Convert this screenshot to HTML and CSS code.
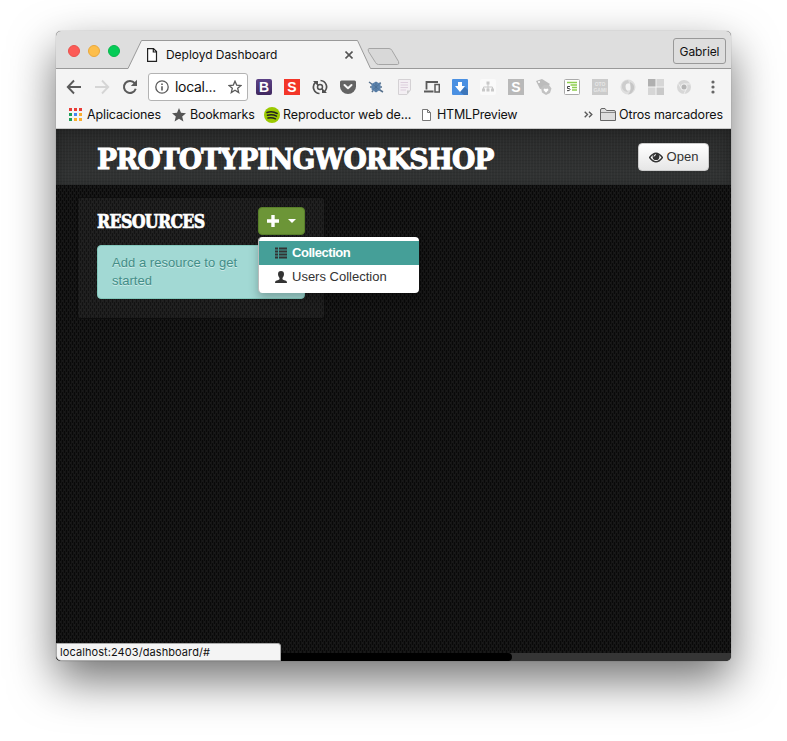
FILE: index.html
```
<!DOCTYPE html>
<html lang="es">
<head>
<meta charset="utf-8">
<title>Deployd Dashboard</title>
<link rel="stylesheet" href="styles.css">
</head>
<body>
<div class="window">
  <div class="tabstrip">
    <svg class="tabshape" width="675" height="38"><path d="M0 37.5H72L85.500 9H301.500L314.500 37.500H675V38H0Z" fill="#f4f4f4"/><path d="M0 37.500H72L85.500 9.500H301.500L314.500 37.500H675" fill="none" stroke="#999"/><path d="M313 17.500h20q2 0 3 2l6.500 11q1 3-1 3h-19q-2 0-3-2l-7-11q-1-3 .5-3z" fill="#d8d8d8" stroke="#a5a5a5"/></svg>
    <div class="lights"><i class="red"></i><i class="yellow"></i><i class="green"></i></div>
    <div class="tab">
      <svg width="12" height="16" viewBox="0 0 12 16"><path d="M.6 1.600H6.500L9.500 4.600V14.400H.6ZM6.300 1.600V5H9.500" fill="#fff" stroke="#222" stroke-width="1.200"/></svg>
      <span class="tab-title">Deployd Dashboard</span>
      <svg class="close" width="8" height="8"><path d="M.5 .5l7 7M7.500 .5l-7 7" stroke="#555" stroke-width="1.600"/></svg>
    </div>
    <div class="profile">Gabriel</div>
  </div>
  <div class="toolbar">
    <svg width="16" height="16" class="back"><path d="M8 1.500L1.800 8 8 14.500M2 8H15" fill="none" stroke="#5a5a5a" stroke-width="1.900"/></svg>
    <svg width="16" height="16" class="fwd"><path d="M8 1.500L14.200 8 8 14.500M14 8H1" fill="none" stroke="#d5d5d5" stroke-width="1.900"/></svg>
    <svg width="16" height="16" class="reload"><path d="M13.700 9.700A6 6 0 1 1 12.700 4.200" fill="none" stroke="#5a5a5a" stroke-width="2"/><path d="M15 .8V7H8.800Z" fill="#5a5a5a"/></svg>
    <div class="omnibox">
      <svg width="14" height="14"><circle cx="7" cy="7" r="6.200" fill="none" stroke="#5a5a5a" stroke-width="1.300"/><path d="M7 6.200V10.500M7 3.500V5" stroke="#5a5a5a" stroke-width="1.600"/></svg>
      <span class="url">local...</span>
      <svg width="14" height="14" viewBox="0 0 14 14"><path d="M7 1.200L8.700 5.100 13 5.500 9.700 8.300 10.700 12.600 7 10.300 3.300 12.600 4.300 8.300 1 5.500 5.300 5.100Z" fill="none" stroke="#5a5a5a" stroke-width="1.300"/></svg>
    </div>
    <div class="extensions">
      <div class="ext bootstrap">B</div>
      <div class="ext scribe">S</div>
      <svg class="ico" viewBox="0 0 16 16"><path d="M8.500 1.500A6.400 6.400 0 0 1 12.800 12.300M7.500 14.500A6.400 6.400 0 0 1 3.200 3.700" fill="none" stroke="#505050" stroke-width="1.700"/><path d="M1 2H6V7ZM15 14H10V9Z" fill="#505050"/><circle cx="8" cy="8" r="2.500" fill="none" stroke="#505050" stroke-width="1.500"/></svg>
      <svg class="ico" viewBox="0 0 16 16"><path d="M1.500 1.500H14.500Q16 1.500 16 3V7.500A8 7.500 0 0 1 0 7.500V3Q0 1.500 1.500 1.500Z" fill="#636363"/><path d="M4.500 6L8 9.300 11.500 6" fill="none" stroke="#f4f4f4" stroke-width="2" stroke-linecap="round" stroke-linejoin="round"/></svg>
      <svg class="ico" viewBox="0 0 16 16"><path d="M1 3L4.500 5.500M11 10.500L15 13M2 8H14M11 4.500L13 4M5 11.500L4 13" stroke="#57718d" stroke-width="1.500"/><path d="M8 2.500L12.500 5V10.500L8 13.500 3.500 10.500V5Z" fill="#5c83ad"/><path d="M5 5.500L11 10.500M11 5.500L5 10.500M8 3V13" stroke="#476b91" stroke-width=".7"/></svg>
      <svg class="ico" viewBox="0 0 16 16"><path d="M2.500 .5H14.500V11L11 15.500H2.500Z" fill="#f3eff3" stroke="#d4d1d4"/><path d="M4.500 3.500H12M4.500 6H12M4.500 8.500H12M4.500 11H10" stroke="#ddcfdd"/><path d="M11 15V11.500H14" fill="#ccc"/></svg>
      <svg class="ico" viewBox="0 0 16 16"><path d="M2.500 10.500V3H14M0 12.500H9.500" fill="none" stroke="#5a5a5a" stroke-width="1.800"/><rect x="11" y="5.500" width="4.300" height="7.500" fill="#f4f4f4" stroke="#5a5a5a" stroke-width="1.500"/></svg>
      <svg class="ico" viewBox="0 0 16 16"><rect width="16" height="16" rx="1" fill="#4a90e2"/><path d="M13 8L16 11V16H12L8 13Z" fill="#3c76ba"/><path d="M6 3H10V7H13L8 13 3 7H6Z" fill="#fff"/></svg>
      <svg class="ico" viewBox="0 0 16 16"><rect width="16" height="16" rx="2" fill="#fafafa"/><path d="M8 5V11M3.500 10V8H12.500V10" fill="none" stroke="#c8c8c8"/><path d="M6.500 2.500h3v3h-3zM2 9.500h3v3H2zM6.500 9.500h3v3h-3zM11 9.500h3v3h-3z" fill="#c8c8c8"/></svg>
      <div class="ext stylish">S</div>
      <svg class="ico" viewBox="0 0 16 16"><path d="M0 2L6 0 14 5 10 9 4 10Z" fill="#bcbcbc"/><circle cx="3" cy="3" r="1" fill="#fff"/><path d="M5 9L8 6 13 6 15.500 9.500 14 14 10 16 6 13.500Z" fill="#c2c2c2"/><path d="M10 13.700L7.500 11Q8 8.500 10 10 12 8.500 12.500 11Z" fill="#fff"/></svg>
      <svg class="ico" viewBox="0 0 16 16"><rect x=".5" y=".5" width="15" height="15" rx="1" fill="#fff" stroke="#aaa"/><path d="M3 3.500H13M6.500 6H13M8 8.500H13M8 11H13" stroke="#8fce50" stroke-width="1.300"/><path d="M6 7.500H3.500V9.500Q6 9 6 10.500 6 12 3 11.700" fill="none" stroke="#444"/></svg>
      <div class="ext oto"><span>OTO</span><span>GAMI</span></div>
      <svg class="ico" viewBox="0 0 16 16"><circle cx="8" cy="8" r="5.500" fill="none" stroke="#dedede" stroke-width="4"/><path d="M8 1Q1 2 2 9 4 13 8 13 5 10 5.500 7 6 4 9 4Z" fill="#cdcdcd"/><path d="M10 3Q15 5 14 10 12 15 8 15.500 11 12 10.500 8 Z" fill="#c6c6c6"/></svg>
      <svg class="ico" viewBox="0 0 16 16"><path d="M0 0h7.500v7.500H0z" fill="#b0b0b0"/><path d="M8.500 0H16v7.500H8.500zM0 8.500h7.500V16H0z" fill="#d6d6d6"/><path d="M8.500 8.500H16V16H8.500z" fill="#c9c9c9"/></svg>
      <svg class="ico" viewBox="0 0 16 16"><circle cx="8" cy="8" r="7" fill="#d7d7d7"/><path d="M8 5H14M8 15L10.500 9.500M5.300 9.500L2.500 4.500" stroke="#eee"/><circle cx="8" cy="8" r="3.500" fill="#eee"/><circle cx="8" cy="8" r="2.500" fill="#b5b5b5"/></svg>
    </div>
    <svg class="menu" width="4" height="14"><circle cx="2" cy="2" r="1.600" fill="#666"/><circle cx="2" cy="7" r="1.600" fill="#666"/><circle cx="2" cy="12" r="1.600" fill="#666"/></svg>
  </div>
  <div class="bookmarks">
    <svg width="14" height="14" class="apps"><path d="M0 0h3v3H0zM5 0h3v3H5zM10 0h3v3h-3z" fill="#e83c36"/><path d="M0 5h3v3H0zM0 10h3v3H0z" fill="#1d9d58"/><path d="M5 5h3v3H5z" fill="#4285f4"/><path d="M10 5h3v3h-3zM5 10h3v3H5zM10 10h3v3h-3z" fill="#f9ae2d"/></svg>
    <span class="b1">Aplicaciones</span>
    <svg width="14" height="14" class="star"><path d="M7 0L9 4.800 14 5.200 10.200 8.500 11.400 13.600 7 10.800 2.600 13.600 3.800 8.500 0 5.200 5 4.800Z" fill="#555"/></svg>
    <span class="b2">Bookmarks</span>
    <svg width="16" height="16" class="spot"><circle cx="8" cy="8" r="8" fill="#9bc900"/><path d="M3 5.500Q8.500 3.800 13.200 6.500M3.500 8.300Q8.500 7 12.500 9.200M4 11Q8 10 11.500 11.800" fill="none" stroke="#222" stroke-width="1.500" stroke-linecap="round"/></svg>
    <span class="b3">Reproductor web de...</span>
    <svg width="9" height="12" class="doc"><path d="M.5 .5H5.500L8.500 3.500V11.500H.5ZM5.500 .5V3.500H8.500" fill="#fff" stroke="#777"/></svg>
    <span class="b4">HTMLPreview</span>
    <svg width="9" height="7" class="chev"><path d="M.7 .7L3.500 3.500 .7 6.300M5 .7L7.800 3.500 5 6.300" fill="none" stroke="#5a5a5a" stroke-width="1.400"/></svg>
    <svg width="16" height="13" class="folder"><path d="M.5 12.500V2Q.5 .5 2 .5H5L6.500 2.500H14Q15.500 2.500 15.500 4V12.500Z" fill="#ddd" stroke="#666"/><path d="M1 4.500H15" stroke="#888"/></svg>
    <span class="b5">Otros marcadores</span>
  </div>
  <header class="header">
    <h1><span>PROTOTYPINGWORKSHOP</span></h1>
    <button class="open"><svg width="14" height="11" viewBox="0 0 14 11"><path d="M.6 5.500Q7-3 13.400 5.500 7 14 .6 5.500Z" fill="#fff" stroke="#333" stroke-width="1.400"/><circle cx="7" cy="4.700" r="3.400" fill="#333"/><path d="M5 4.500Q5 2.700 7 2.700" fill="none" stroke="#fff"/></svg><span>Open</span></button>
  </header>
  <main class="content">
    <section class="panel">
      <div class="panel-head">
        <h2><span>RESOURCES</span></h2>
        <div class="dropdown">
          <button class="add"><svg width="12" height="12"><path d="M4.300 0h3.400v4.300H12v3.400H7.700V12H4.300V7.700H0V4.300h4.300z" fill="#fff"/></svg><svg class="caret" width="8" height="4"><path d="M0 0H8L4 4Z" fill="#fff"/></svg></button>
          <div class="dropdown-menu">
            <div class="item active"><svg width="12" height="12"><path d="M0 .5h3v2H0zM4 .5h8v2H4zM0 3.500h3v2H0zM4 3.500h8v2H4zM0 6.500h3v2H0zM4 6.500h8v2H4zM0 9.500h3v2H0zM4 9.500h8v2H4z" fill="#333"/></svg><span>Collection</span></div>
            <div class="item"><svg width="12" height="12"><path d="M6 0Q9 0 9 3.300 9 5.500 7.500 7V8.200Q8 9 11 9.700 12 10 12 12H0Q0 10 1 9.700 4 9 4.500 8.200V7Q3 5.500 3 3.300 3 0 6 0Z" fill="#333"/></svg><span>Users Collection</span></div>
          </div>
        </div>
      </div>
      <div class="alert">Add a resource to get started</div>
    </section>
  </main>
  <div class="scrollbar"><div class="thumb"></div></div>
  <div class="status">localhost:2403/dashboard/#</div>
</div>
</body>
</html>
```
FILE: styles.css
```
* { box-sizing: border-box; }
body { margin: 0; background: #fff; height: 741px; overflow: hidden; padding: 31px 56px; font-family: Inter, sans-serif; color: #111; }
svg { display: block; flex: none; }
.window { position: relative; display: flex; flex-direction: column; width: 675px; height: 630px; border-radius: 5px; overflow: hidden; background: #111; }
body::before { content: ""; position: absolute; left: 56px; top: 31px; width: 675px; height: 630px; border-radius: 5px; box-shadow: 0 0 1px rgba(0,0,0,.5), 0 19px 46px rgba(0,0,0,.56); }

.tabstrip { position: relative; display: flex; height: 38px; background: #dedede; flex: none; }
.tabshape { position: absolute; left: 0; top: 0; }
.lights { position: relative; display: flex; gap: 8px; padding: 14px 0 0 12px; width: 91px; }
.lights i { width: 12px; height: 12px; border-radius: 50%; }
.red { background: #fc5b57; border: 1px solid #e9514c; }
.yellow { background: #fdbe4b; border: 1px solid #eaa83b; }
.green { background: #05cc57; border: 1px solid #09b64c; }
.tab { position: relative; display: flex; align-items: center; width: 206px; height: 30px; margin-top: 9px; font-size: 12px; }
.tab-title { margin-left: 7px; margin-top: -2px; white-space: nowrap; letter-spacing: -.04px; }
.close { margin-left: auto; }
.profile { position: relative; margin: 7px 5px 0 auto; width: 53px; height: 26px; border: 1px solid #999; border-radius: 3px; font-size: 12px; line-height: 25px; text-align: center; letter-spacing: -.1px; }

.toolbar { display: flex; align-items: center; height: 36px; background: #f4f4f4; flex: none; padding-left: 10px; }
.fwd { margin-left: 12px; }
.reload { margin-left: 12px; }
.omnibox { display: flex; align-items: center; margin-left: 10px; width: 100px; height: 28px; border: 1px solid #b3b3b3; border-radius: 3px; background: #fff; padding: 0 5px 0 6px; }
.url { font-size: 14px; margin: 0 auto 1px 6px; letter-spacing: -.3px; }
.extensions { display: flex; gap: 12px; margin-left: 8px; }
.ico { width: 16px; height: 16px; }
.ext { width: 16px; height: 16px; display: flex; align-items: center; justify-content: center; color: #fff; font: bold 14px/16px "Liberation Sans", sans-serif; }
.bootstrap { background: linear-gradient(#5c4286, #40285f); border-radius: 2px; }
.scribe { background: #f33629; }
.stylish { background: #b9b9b9; }
.oto { background: #cbcbcb; flex-direction: column; font-size: 5px; line-height: 6px; color: #e7e7e7; }
.menu { margin-left: 19px; }

.bookmarks { display: flex; align-items: center; height: 24px; padding: 0 8px 4px 13px; background: #f4f4f4; border-bottom: 1px solid #c8c8c8; flex: none; font-size: 12.500px; letter-spacing: -.13px; white-space: nowrap; }
.b1 { margin-left: 4px; width: 75px; }
.star { margin-left: 10px; }
.b2 { margin-left: 4px; width: 64px; letter-spacing: -.2px; }
.spot { margin-left: 10px; }
.b3 { margin-left: 3px; width: 128px; }
.doc { margin-left: 11px; }
.b4 { margin-left: 6px; letter-spacing: -.2px; }
.chev { margin-left: auto; }
.folder { margin-left: 7px; }
.b5 { margin-left: 3px; width: 104px; }

.header { display: flex; align-items: center; justify-content: space-between; height: 56px; flex: none; padding: 0 22px 0 41px;
  background: repeating-linear-gradient(90deg, rgba(255,255,255,.025) 0 1px, transparent 1px 3px), repeating-linear-gradient(0deg, rgba(0,0,0,.08) 0 1px, transparent 1px 3px), linear-gradient(#292a2a, #333535); box-shadow: inset 0 0 14px rgba(0,0,0,.25); }
h1, h2 { margin: 0; color: #fff; font-family: "DejaVu Serif", serif; font-weight: bold; white-space: nowrap; }
h1 { width: 400px; font-size: 28.500px; line-height: 40px; margin-top: 3px; }
h1 span, h2 span { display: inline-block; transform-origin: 0 50%; }
h1 span { transform: scaleX(.938); letter-spacing: -1px; -webkit-text-stroke: 1.100px #fff; }
button { border: 0; padding: 0; display: flex; align-items: center; justify-content: center; font: 13px "Liberation Sans", sans-serif; color: #333; }
.open { width: 71px; height: 28px; border-radius: 4px; border: 1px solid #ccc; background: linear-gradient(#fff, #e6e6e6); gap: 4px; }
.open span { margin-top: -1px; }

/* woven texture: two offset columns of dark dashes */
.content { flex: 1; padding: 12px 21px; font-family: "Liberation Sans", sans-serif; font-size: 13px;
  background-color: #191919;
  background-image: linear-gradient(#0a0a0a 4px, transparent 4px), linear-gradient(#0a0a0a 4px, transparent 4px), linear-gradient(90deg, #141414 1px, transparent 1px);
  background-size: 4px 6px, 4px 6px, 2px 6px;
  background-position: 0 0, 2px 3px, 1px 0;
  background-image: conic-gradient(from 0deg at 1px 4px, transparent 270deg, #090909 0), conic-gradient(from 0deg at 1px 4px, transparent 270deg, #090909 0), linear-gradient(90deg, #151515 1px, transparent 1px); }
.panel { width: 248px; height: 122px; border: 1px solid #0d0d0d; border-radius: 3px; padding: 9px 19px; background: rgba(255,255,255,.045); }
.panel-head { display: flex; justify-content: space-between; }
h2 { font-size: 18px; line-height: 30px; width: 110px; }
h2 span { transform: scaleX(.882); letter-spacing: -.8px; -webkit-text-stroke: .7px #fff; }
.dropdown { position: relative; }
.add { width: 47px; height: 28px; border-radius: 4px; background: #6c9537; border: 1px solid #59802a; gap: 9px; }
.dropdown-menu { position: absolute; z-index: 2; left: 0; top: 30px; width: 161px; height: 56px; padding: 4px 0; background: #fff; background-clip: padding-box; border-radius: 4px; border-left: 1px solid #bbb; box-shadow: 0 5px 10px rgba(0,0,0,.25); }
.item { display: flex; align-items: center; gap: 5px; height: 24px; padding-left: 16px; color: #333; white-space: nowrap; }
.item span { margin-top: -2px; }
.active { background: #459f98; }
.active span { color: #fff; font-weight: bold; letter-spacing: -.45px; }
.alert { margin-top: 8px; width: 208px; height: 54px; padding: 8px 40px 8px 14px; border: 1px solid #83c8bc; border-radius: 4px; background: #a2d9d4; color: #438d87; line-height: 18px; letter-spacing: .04px; text-shadow: 0 1px 0 rgba(255,255,255,.5); }
.scrollbar { height: 8px; flex: none; background: #353535; }
.thumb { width: 456px; height: 8px; border-radius: 0 4px 4px 0; background: #000; }
.status { position: absolute; left: 0; bottom: 0; width: 225px; height: 18px; border: 1px solid #aaa; border-radius: 0 3px 0 5px; background: #f4f4f4; padding-left: 3px; font-size: 11px; line-height: 17px; letter-spacing: .08px; }
```
